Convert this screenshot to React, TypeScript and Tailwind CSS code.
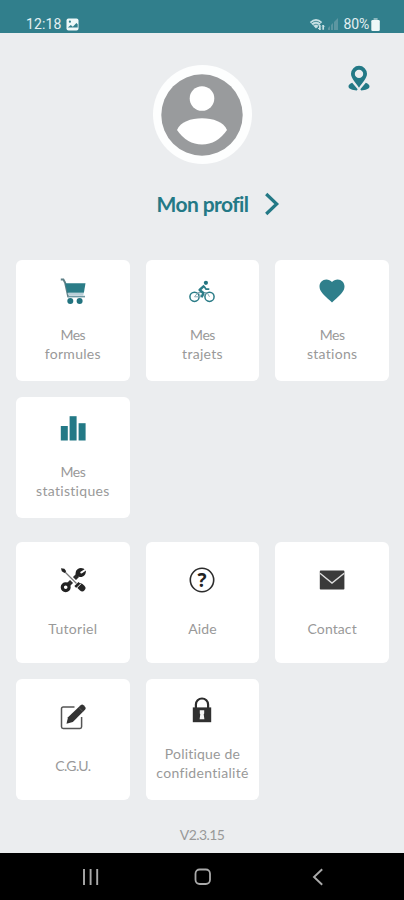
import React from 'react';

const CartIcon = () => (
    <svg width="26" height="26" viewBox="0 0 26 26" fill="none">
        <path d="M.8 1.5h2.6l1.7 3.2 3.2 14.6" stroke="#5f8087" strokeWidth="1.9" />
        <path d="M5.2 5.3h20.3l-1.6 9.5H7.4z" fill="#2b7c87" />
        <path d="M7.6 15h16.2l-.6 2.6H8.2z" fill="#b9cfd8" />
        <path d="M8 18.6h17" stroke="#6f98a3" strokeWidth="1.6" />
        <circle cx="10.3" cy="23" r="3" fill="#22737f" />
        <circle cx="19.6" cy="23" r="3" fill="#22737f" />
    </svg>
);

const BikeIcon = () => (
    <svg width="26" height="26" viewBox="0 0 26 26" fill="none" stroke="#2b7c87">
        <circle cx="5.5" cy="18.8" r="4.6" strokeWidth="1.5" />
        <circle cx="20.5" cy="18.8" r="4.6" strokeWidth="1.5" />
        <path d="M5.5 18.8 9 14.5h9l2.5 4.3M9 14.5l4 4.5 5-4.5M5.5 18.8H13" stroke="#8aa9b4" strokeWidth="1" />
        <path d="M15.3 7.7 10.6 12l3.8 3-1.8 4.2" strokeWidth="2.4" strokeLinejoin="round" />
        <path d="m15 8.2 2.1 3h3.2" strokeWidth="1.7" strokeLinejoin="round" />
        <circle cx="16.9" cy="4.8" r="2.1" fill="#22737f" stroke="none" />
    </svg>
);

const HeartIcon = () => (
    <svg width="26" height="26" viewBox="1.6 1.8 20.8 20.8">
        <path
            fill="#2f7f8b"
            d="m12 21.35-1.45-1.32C5.4 15.36 2 12.28 2 8.5 2 5.42 4.42 3 7.5 3c1.74 0 3.41.81 4.5 2.09C13.09 3.81 14.76 3 16.5 3 19.58 3 22 5.42 22 8.5c0 3.78-3.4 6.86-8.55 11.54z"
        />
    </svg>
);

const StatsIcon = () => (
    <svg width="26" height="26" viewBox="0 0 26 26" fill="#237986">
        <rect x=".8" y="11" width="7" height="14.5" />
        <rect x="9.6" y="1.2" width="7" height="24.3" />
        <rect x="18.6" y="8.2" width="7" height="17.3" />
    </svg>
);

const ToolsIcon = () => (
    <svg width="26" height="26" viewBox="0 0 26 26" fill="none">
        <path d="m8.5 17.5 9-9" stroke="#2c2c2c" strokeWidth="4.2" />
        <path d="m5 5 11 11" stroke="#fff" strokeWidth="4" />
        <path d="m4.5 4.5 12 12" stroke="#777" strokeWidth="1.3" />
        <path d="m1 1.2 3.4.6 1.8 2.4-1.7 1.7L1.8 4.2z" fill="#222" />
        <path d="m15.3 20 4.2-4.2" stroke="#222" strokeWidth="2.6" />
        <path d="m20.6 19.6 1.6 1.5" stroke="#262626" strokeWidth="6.4" strokeLinecap="round" />
        <path d="m16.9 20.8 4-4" stroke="#fff" strokeWidth="1" />
        <circle cx="5.7" cy="20.3" r="3.4" stroke="#222" strokeWidth="3.2" />
        <path d="M23 2.3a4.6 4.6 0 0 0-6.6 4.8 4.7 4.7 0 0 0 8.6-2L21.8 7.4l-2-.6-.4-2.1z" fill="#222" stroke="#222" strokeWidth="1.6" />
    </svg>
);

const HelpIcon = () => (
    <svg width="26" height="26" viewBox="0 0 26 26" fill="none">
        <circle cx="13" cy="13" r="11.7" stroke="#2c2c2c" strokeWidth="1.6" />
        <text x="13" y="20" textAnchor="middle" fontFamily="Open Sans, sans-serif" fontWeight="700" fontSize="19" fill="#222">
            ?
        </text>
    </svg>
);

const MailIcon = () => (
    <svg width="26" height="26" viewBox="0 0 26 26" fill="none">
        <rect x=".8" y="3.6" width="24.6" height="19" rx=".8" fill="#3a3a3a" />
        <path d="M1 6.2 13 16 25.2 6.2" stroke="#ddd" strokeWidth="1.4" />
    </svg>
);

const EditIcon = () => (
    <svg width="26" height="26" viewBox="0 0 26 26" fill="none">
        <path d="M14.5 3H3.2Q1.5 3 1.5 4.7v18Q1.5 24.4 3.2 24.4H20q1.6 0 1.6-1.7V13" stroke="#555" strokeWidth="1.5" />
        <path d="m6.5 19.7 1.5-6.4L20.6 1.3a2.2 2.2 0 0 1 3 0l1.4 1.4a2.2 2.2 0 0 1 0 3L12.8 17.9z" fill="#333" />
        <path d="m19 3.7 3.8 3.8" stroke="#666" strokeWidth=".8" />
    </svg>
);

const LockIcon = () => (
    <svg width="26" height="26" viewBox="0 0 26 26" fill="none">
        <path d="M6.9 11V7.6a6.1 6.1 0 0 1 12.2 0V11" stroke="#2c2c2c" strokeWidth="2.2" />
        <rect x="3.8" y="10.4" width="18.4" height="14.8" fill="#303030" />
        <path d="M10.8 13.2h4.4v3.4l-.5.7.7 4.9h-4.8l.7-4.9-.5-.7z" fill="#f5f5f5" />
    </svg>
);

interface CardProps {
    icon: React.ReactNode;
    lines: { text: string; tracking: string }[];
}

const MenuCard: React.FC<CardProps> = ({ icon, lines }) => (
    <button className="flex h-[121px] flex-col items-center justify-center rounded-md bg-white">
        {icon}
        <div className={`flex flex-col items-center ${lines.length > 1 ? 'mt-[22px]' : 'mt-[27px]'}`}>
            {lines.map((line) => (
                <span key={line.text} className={`whitespace-nowrap text-[14px] leading-[18.5px] text-[#999] ${line.tracking}`}>
                    {line.text}
                </span>
            ))}
        </div>
    </button>
);

const mainItems: CardProps[] = [
    { icon: <CartIcon />, lines: [{ text: 'Mes', tracking: 'tracking-[-0.5px]' }, { text: 'formules', tracking: 'tracking-[0.3px]' }] },
    { icon: <BikeIcon />, lines: [{ text: 'Mes', tracking: 'tracking-[-0.5px]' }, { text: 'trajets', tracking: 'tracking-[0.3px]' }] },
    { icon: <HeartIcon />, lines: [{ text: 'Mes', tracking: 'tracking-[-0.5px]' }, { text: 'stations', tracking: 'tracking-[0.3px]' }] },
    { icon: <StatsIcon />, lines: [{ text: 'Mes', tracking: 'tracking-[-0.5px]' }, { text: 'statistiques', tracking: 'tracking-[0.3px]' }] },
];

const infoItems: CardProps[] = [
    { icon: <ToolsIcon />, lines: [{ text: 'Tutoriel', tracking: 'tracking-[0.3px]' }] },
    { icon: <HelpIcon />, lines: [{ text: 'Aide', tracking: 'tracking-[0.1px]' }] },
    { icon: <MailIcon />, lines: [{ text: 'Contact', tracking: 'tracking-[0.1px]' }] },
    { icon: <EditIcon />, lines: [{ text: 'C.G.U.', tracking: 'tracking-[-0.6px]' }] },
    { icon: <LockIcon />, lines: [{ text: 'Politique de', tracking: 'tracking-[0.2px]' }, { text: 'confidentialité', tracking: 'tracking-[0.3px]' }] },
];

const StatusBar = () => (
    <header className="flex h-[33px] items-end justify-between bg-[#317f8c] pr-6 pl-[26px] font-[Roboto,sans-serif] text-[14px] leading-[18px] text-[#e3f0f2]">
        <div className="flex items-center gap-[5px]">
            <span className="tracking-[0.1px]">12:18</span>
            <svg width="13" height="13" viewBox="0 0 13 13" fill="none">
                <rect x=".5" y=".5" width="12" height="12" rx="2" fill="#eef8f8" />
                <path d="m1.8 9.6 3-2.6 2 1.7 3.6-3.7 1.3 1.2v3.4z" fill="#317f8c" />
                <circle cx="3.9" cy="3.7" r="1.1" fill="#317f8c" />
            </svg>
        </div>
        <div className="flex items-center">
            <svg width="17" height="14" viewBox="0 0 17 14" fill="none">
                <path d="M.8 5Q7 -1 13.2 5L7 11.6z" fill="#c9e1e4" />
                <path d="M2.4 6.2q4.6-3.8 9.2 0M4.3 8.2q2.7-2.2 5.4 0" stroke="#317f8c" strokeWidth=".8" />
                <path d="M10.8 8v4.6M14.2 12.8V8.2" stroke="#c9e1e4" strokeWidth="1.7" />
                <path d="m8.8 10.7 2 2.2 1-1M13 9.3l1.2-1.2 1.4 1.4" stroke="#c9e1e4" />
            </svg>
            <svg className="ml-[2px]" width="11" height="12" viewBox="0 0 11 12" fill="#5c96a1">
                <path d="M0 12v-2l2-2v4zM3 12V7l2-2v7zM6 12V4l4-4v12z" />
            </svg>
            <span className="ml-[5px] tracking-[-0.2px]">80%</span>
            <svg className="ml-[2px]" width="9" height="13" viewBox="0 0 9 13">
                <rect x="2.6" width="4" height="3" fill="#8cb8bf" />
                <rect x=".3" y="2" width="8.5" height="11" rx="1.3" fill="#eef8f8" />
            </svg>
        </div>
    </header>
);

const App: React.FC = () => {
    return (
        <div className="flex h-[900px] w-[404px] flex-col overflow-hidden bg-[#ebedef] font-[Lato,sans-serif]">
            <StatusBar />

            {/* Profile */}
            <section className="relative flex h-[227px] flex-col items-center pt-[32px]">
                <div className="flex h-[99px] w-[99px] items-center justify-center rounded-full bg-[#fdfefe]">
                    <svg width="82" height="82" viewBox="0 0 82 82">
                        <circle cx="41" cy="41" r="40.7" fill="#999b9d" />
                        <circle cx="41" cy="24.5" r="12.3" fill="#fff" />
                        <path d="M16 56C19 48 30 44.2 41 44.2S63 48 66 56Q56 70.5 41 70.5T16 56Z" fill="#fff" />
                    </svg>
                </div>
                <button className="mt-[26px] ml-[32px] flex items-center">
                    <span className="w-[92px] whitespace-nowrap text-[21px] leading-[28px] font-bold tracking-[-0.6px] text-[#237986]">Mon profil</span>
                    <svg className="ml-[15px]" width="16" height="24" viewBox="0 0 16 24" fill="none">
                        <path d="m2.2 2 10.5 10L2.2 22" stroke="#237986" strokeWidth="3.2" />
                    </svg>
                </button>
                <button className="absolute top-[32px] right-[34px]">
                    <svg width="22" height="26" viewBox="0 0 22 26" fill="#237986">
                        <path d="M4.2 17.8C1.8 18.6.3 20.2.5 21.8c.2 2 4 3.4 8.2 3.6l1-1.2zM17.8 17.8c2.4.8 3.9 2.4 3.7 4-.2 2-4 3.4-8.2 3.6l-1-1.2z" />
                        <path
                            fillRule="evenodd"
                            d="M11 .8a8 8 0 0 0-8 8c0 4.6 4.6 8.6 8 14 3.4-5.4 8-9.4 8-14a8 8 0 0 0-8-8Zm0 3.9a4.2 4.2 0 1 1 0 8.4 4.2 4.2 0 0 1 0-8.4Z"
                        />
                    </svg>
                </button>
            </section>

            {/* Menu */}
            <main className="flex flex-col gap-6 pr-[15px] pl-4">
                <div className="grid grid-cols-3 gap-4">
                    {mainItems.map((item) => (
                        <MenuCard key={item.lines.map((l) => l.text).join(' ')} {...item} />
                    ))}
                </div>
                <div className="grid grid-cols-3 gap-4">
                    {infoItems.map((item) => (
                        <MenuCard key={item.lines.map((l) => l.text).join(' ')} {...item} />
                    ))}
                </div>
            </main>

            <p className="mt-[25px] text-center text-[14px] leading-[20px] tracking-[-0.6px] text-[#999]">V2.3.15</p>

            {/* Android navigation */}
            <nav className="mt-auto flex h-[47px] shrink-0 items-center justify-between bg-black pr-[80px] pl-[82px] text-[#aaa]">
                <svg width="18" height="16" viewBox="0 0 18 16" fill="none" stroke="currentColor" strokeWidth="1.9">
                    <path d="M2 0v16M8.6 0v16M15.2 0v16" />
                </svg>
                <svg className="mr-[6px]" width="18" height="18" viewBox="0 0 18 18" fill="none" stroke="currentColor" strokeWidth="1.8">
                    <rect x="1.5" y="1.5" width="14.5" height="14.5" rx="4.2" />
                </svg>
                <svg width="12" height="18" viewBox="0 0 12 18" fill="none" stroke="currentColor" strokeWidth="1.9">
                    <path d="M10.2 1.2 2 9l8.2 7.8" />
                </svg>
            </nav>
        </div>
    );
};

export default App;
